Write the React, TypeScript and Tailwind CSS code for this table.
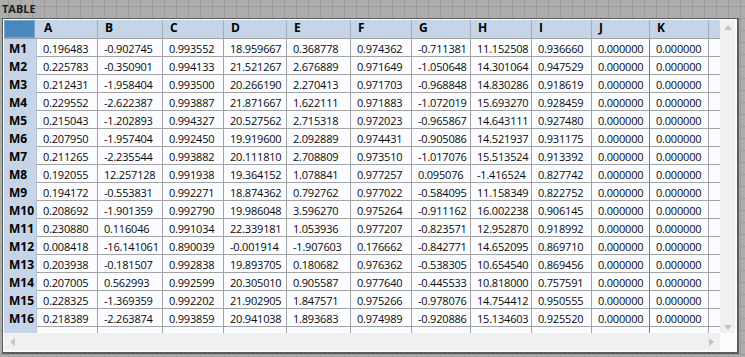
const COLS = [
  { name: "A", w: "w-[61px]" },
  { name: "B", w: "w-[65px]" },
  { name: "C", w: "w-[61px]" },
  { name: "D", w: "w-[63px]" },
  { name: "E", w: "w-[64px]" },
  { name: "F", w: "w-[61px]" },
  { name: "G", w: "w-[59px]" },
  { name: "H", w: "w-[61px]" },
  { name: "I", w: "w-[60px]" },
  { name: "J", w: "w-[58px]" },
  { name: "K", w: "w-[59px]" },
];

const DATA: string[][] = [
  ["0.196483", "-0.902745", "0.993552", "18.959667", "0.368778", "0.974362", "-0.711381", "11.152508", "0.936660"],
  ["0.225783", "-0.350901", "0.994133", "21.521267", "2.676889", "0.971649", "-1.050648", "14.301064", "0.947529"],
  ["0.212431", "-1.958404", "0.993500", "20.266190", "2.270413", "0.971703", "-0.968848", "14.830286", "0.918619"],
  ["0.229552", "-2.622387", "0.993887", "21.871667", "1.622111", "0.971883", "-1.072019", "15.693270", "0.928459"],
  ["0.215043", "-1.202893", "0.994327", "20.527562", "2.715318", "0.972023", "-0.965867", "14.643111", "0.927480"],
  ["0.207950", "-1.957404", "0.992450", "19.919600", "2.092889", "0.974431", "-0.905086", "14.521937", "0.931175"],
  ["0.211265", "-2.235544", "0.993882", "20.111810", "2.708809", "0.973510", "-1.017076", "15.513524", "0.913392"],
  ["0.192055", "12.257128", "0.991938", "19.364152", "1.078841", "0.977257", "0.095076", "-1.416524", "0.827742"],
  ["0.194172", "-0.553831", "0.992271", "18.874362", "0.792762", "0.977022", "-0.584095", "11.158349", "0.822752"],
  ["0.208692", "-1.901359", "0.992790", "19.986048", "3.596270", "0.975264", "-0.911162", "16.002238", "0.906145"],
  ["0.230880", "0.116046", "0.991034", "22.339181", "1.053936", "0.977207", "-0.823571", "12.952870", "0.918992"],
  ["0.008418", "-16.141061", "0.890039", "-0.001914", "-1.907603", "0.176662", "-0.842771", "14.652095", "0.869710"],
  ["0.203938", "-0.181507", "0.992838", "19.893705", "0.180682", "0.976362", "-0.538305", "10.654540", "0.869456"],
  ["0.207005", "0.562993", "0.992599", "20.305010", "0.905587", "0.977640", "-0.445533", "10.818000", "0.757591"],
  ["0.228325", "-1.369359", "0.992202", "21.902905", "1.847571", "0.975266", "-0.978076", "14.754412", "0.950555"],
  ["0.218389", "-2.263874", "0.993859", "20.941038", "1.893683", "0.974989", "-0.920886", "15.134603", "0.925520"],
].map((r) => [...r, "0.000000", "0.000000"]);

function Arrow({ dir }: { dir: "up" | "down" | "left" | "right" }) {
  const pts = {
    up: "0,5 4,0 8,5",
    down: "0,0 8,0 4,5",
    left: "5,0 5,8 0,4",
    right: "0,0 0,8 5,4",
  }[dir];
  const size = dir === "up" || dir === "down" ? "w-[8px] h-[5px]" : "w-[5px] h-[8px]";
  const vb = dir === "up" || dir === "down" ? "0 0 8 5" : "0 0 5 8";
  return (
    <svg viewBox={vb} className={size}>
      <polygon points={pts} fill="#c4c4c4" />
    </svg>
  );
}

export default function App() {
  return (
    <div
      className="w-[745px] h-[357px] overflow-hidden bg-[#adadad] bg-[linear-gradient(to_right,#9b9b9b_1px,transparent_1px),linear-gradient(to_bottom,#9b9b9b_1px,transparent_1px)] bg-[size:12px_12px] bg-[position:8px_6px]"
      style={{ fontFamily: "'Open Sans', 'Noto Sans', sans-serif" }}
    >
      <div className="h-[18px] pl-[2px] pt-[2px] text-[11px] leading-[13px] font-bold text-[#1c1c1c]">
        TABLE
      </div>

      <div className="ml-[2px] w-[737px] h-[336px] border-l border-t border-r-2 border-b-2 border-[#5c5c5c] bg-[#fbfbfb] pl-px pt-px pr-[2px] pb-[2px] flex flex-col">
        <div className="flex h-[313px]">
          {/* table body */}
          <div className="w-[716px] overflow-hidden flex flex-col">
            {/* header row */}
            <div className="flex h-[19px] shrink-0 bg-[#c5d5e7] border-b border-[#a3a3a3]">
              <div className="w-[33px] shrink-0 flex">
                <div className="w-[31px] h-[18px] bg-[#4a87bd] border border-[#78a4cc]" />
              </div>
              {COLS.map((c) => (
                <div
                  key={c.name}
                  className={`${c.w} shrink-0 border-r border-[#a2aebb] pl-[7px] text-[12px] leading-[15px] font-bold text-black`}
                >
                  {c.name}
                </div>
              ))}
              <div className="w-[11px] shrink-0" />
            </div>

            {DATA.map((row, i) => (
              <div key={i} className="flex h-[18px] shrink-0">
                <div className="w-[33px] shrink-0 bg-[#c5d5e7] border-r border-[#b4c2d2] pl-[5px] pt-[2px] text-[12px] leading-[15px] font-bold text-black">
                  M{i + 1}
                </div>
                {row.map((v, j) => (
                  <div
                    key={j}
                    className={`${COLS[j].w} shrink-0 bg-[#fafcff] border-b border-r ${
                      j === 9 ? "border-r-[#3f82d4] border-b-[#a3a3a3]" : "border-[#a3a3a3]"
                    } pl-[6px] pt-[2px] text-[11px] leading-[15px] tracking-[-0.2px] text-[#0a0a0a]`}
                  >
                    {v}
                  </div>
                ))}
                <div className="w-[11px] shrink-0 bg-[#fafcff] border-b border-[#a3a3a3]" />
              </div>
            ))}

            {/* partial row */}
            <div className="flex h-[6px] shrink-0">
              <div className="w-[33px] shrink-0 bg-[#c5d5e7] border-r border-[#b4c2d2]" />
              {COLS.map((c, j) => (
                <div
                  key={c.name}
                  className={`${c.w} shrink-0 bg-[#fafcff] border-r ${j === 9 ? "border-[#3f82d4]" : "border-[#a3a3a3]"}`}
                />
              ))}
              <div className="w-[11px] shrink-0 bg-[#fafcff]" />
            </div>
          </div>

          {/* vertical scrollbar */}
          <div className="w-[15px] bg-[#f0f0f0] flex flex-col items-center justify-between pt-[5px] pb-[3px]">
            <Arrow dir="up" />
            <Arrow dir="down" />
          </div>
        </div>

        {/* horizontal scrollbar */}
        <div className="flex h-[17px]">
          <div className="w-[716px] bg-[#f0f0f0] flex items-center justify-between pl-[6px] pr-[6px]">
            <Arrow dir="left" />
            <Arrow dir="right" />
          </div>
          <div className="w-[15px] bg-[#fbfbfb]" />
        </div>
      </div>
    </div>
  );
}
